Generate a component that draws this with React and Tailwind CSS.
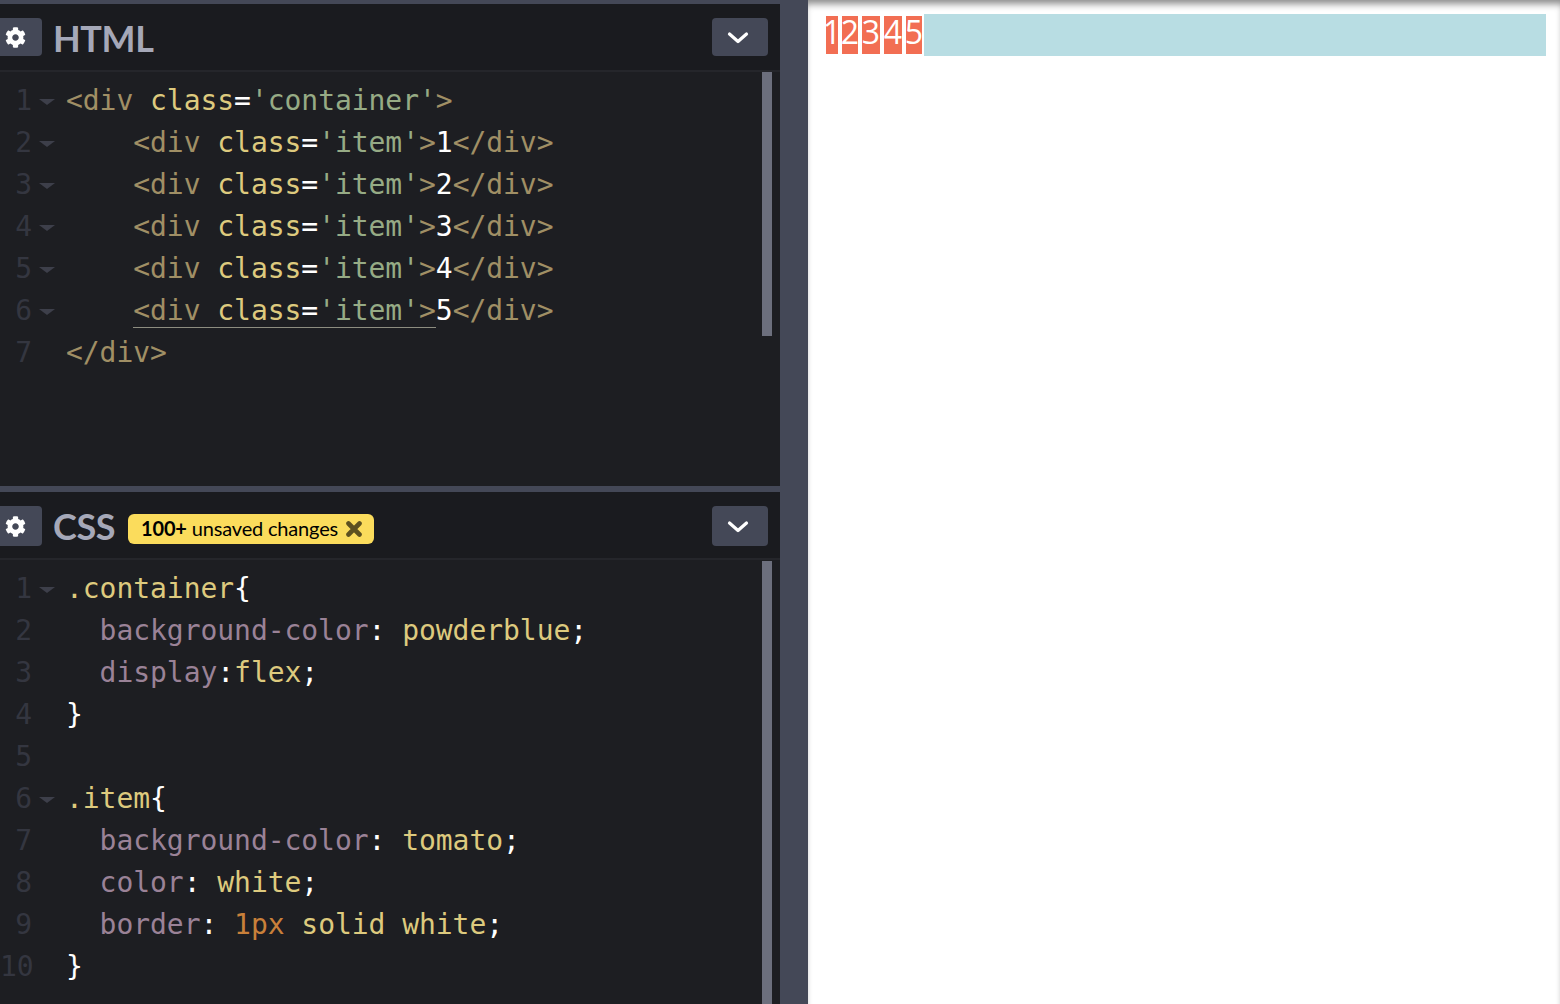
import React from 'react';
import { FaCog } from 'react-icons/fa';

const TAG = 'text-[#a08f65]';
const ATTR = 'text-[#ddca7e]';
const STR = 'text-[#96ab85]';
const WHITE = 'text-white';
const PROP = 'text-[#9a8297]';
const NUM = 'text-[#c9803a]';

function itemLine(n, underline) {
  const open = (
    <>
      <span className={TAG}>{'<div '}</span>
      <span className={ATTR}>class</span>
      <span className={WHITE}>=</span>
      <span className={STR}>'item'</span>
      <span className={TAG}>{'>'}</span>
    </>
  );
  return [
    ['    ', ''],
    underline ? [<span className="border-b border-[#8d8d80]">{open}</span>, ''] : [open, ''],
    [n, WHITE],
    ['</div>', TAG],
  ];
}

const htmlLines = [
  {
    fold: true,
    parts: [
      ['<div ', TAG],
      ['class', ATTR],
      ['=', WHITE],
      ["'container'", STR],
      ['>', TAG],
    ],
  },
  { fold: true, parts: itemLine('1') },
  { fold: true, parts: itemLine('2') },
  { fold: true, parts: itemLine('3') },
  { fold: true, parts: itemLine('4') },
  { fold: true, parts: itemLine('5', true) },
  { parts: [['</div>', TAG]] },
];

const cssLines = [
  { fold: true, parts: [['.container', ATTR], ['{', WHITE]] },
  { parts: [['  background-color', PROP], [': ', WHITE], ['powderblue', ATTR], [';', WHITE]] },
  { parts: [['  display', PROP], [':', WHITE], ['flex', ATTR], [';', WHITE]] },
  { parts: [['}', WHITE]] },
  { parts: [] },
  { fold: true, parts: [['.item', ATTR], ['{', WHITE]] },
  { parts: [['  background-color', PROP], [': ', WHITE], ['tomato', ATTR], [';', WHITE]] },
  { parts: [['  color', PROP], [': ', WHITE], ['white', ATTR], [';', WHITE]] },
  {
    parts: [
      ['  border', PROP],
      [': ', WHITE],
      ['1px', NUM],
      [' ', ''],
      ['solid white', ATTR],
      [';', WHITE],
    ],
  },
  { parts: [['}', WHITE]] },
];

function CodeLines({ lines }) {
  return (
    <div className="pt-[8px] font-['DejaVu_Sans_Mono',monospace] text-[28px] leading-[42px] tracking-[-0.05px] whitespace-pre">
      {lines.map((line, i) => (
        <div key={i} className="flex h-[42px] items-center">
          <div className="flex w-[66px] shrink-0 items-center">
            <span className="w-[32px] text-right text-[#343640]">{i + 1}</span>
            {line.fold && (
              <svg className="mt-[2px] ml-[7px]" width="16" height="6" viewBox="0 0 16 6">
                <path d="M0 0h16L8 6z" fill="#3d3f4a" />
              </svg>
            )}
          </div>
          <div>
            {line.parts.map((part, j) => (
              <span key={j} className={part[1]}>{part[0]}</span>
            ))}
          </div>
        </div>
      ))}
    </div>
  );
}

function PanelHeader({ title, tall, children }) {
  return (
    <div className="flex h-[68px] shrink-0 items-start border-b-2 border-[#25262b] bg-[#1a1b1f]">
      <div className={`mt-[14px] flex w-[42px] items-center justify-center rounded-r bg-[#444857] pr-[11px] text-white ${tall ? 'h-[40px]' : 'h-[38px]'}`}>
        <FaCog size={21} />
      </div>
      <h2 className="mt-[12px] ml-[11px] font-['Lato',sans-serif] text-[36px] leading-[44px] font-bold tracking-[-0.4px] text-[#a5a8b8]">{title}</h2>
      {children}
      <div className={`mt-[14px] mr-3 ml-auto flex w-[56px] items-center justify-center rounded bg-[#444857] pr-[4px] pt-[2px] text-white ${tall ? 'h-[40px]' : 'h-[38px]'}`}>
        <svg width="22" height="14" viewBox="0 0 22 14" fill="none">
          <path d="M2.5 3 11 10.5 19.5 3" stroke="white" strokeWidth="3.2" strokeLinecap="round" strokeLinejoin="round" />
        </svg>
      </div>
    </div>
  );
}

function Panel({ className, header, lines, thumbClass }) {
  return (
    <section className={`relative flex flex-col overflow-hidden bg-[#1d1e22] ${className}`}>
      {header}
      <CodeLines lines={lines} />
      {/* scrollbar thumb */}
      <div className={`absolute left-[762px] w-[10px] bg-[#6c6f7d] ${thumbClass}`} />
    </section>
  );
}

const items = [
  ['1', 'w-[16px]'],
  ['2', 'w-[20px]'],
  ['3', 'w-[22px]'],
  ['4', 'w-[22px]'],
  ['5', 'w-[20px]'],
];

export default function App() {
  return (
    <div className="flex h-screen overflow-hidden bg-white">
      <div className="flex w-[780px] shrink-0 flex-col">
        <div className="h-1 bg-[#444857]" />
        <Panel
          className="h-[482px]"
          header={<PanelHeader title="HTML" />}
          lines={htmlLines}
          thumbClass="top-[68px] h-[264px]"
        />
        <div className="h-[6px] bg-[#444857]" />
        <Panel
          className="flex-1"
          header={
            <PanelHeader title="CSS" tall>
              <div className="mt-[22px] ml-[13px] flex h-[30px] w-[246px] items-center rounded-md bg-[#fbdc5c] pb-[2px] pl-[13px] font-['Lato',sans-serif] text-[20px] tracking-[-0.18px] text-black">
                <b className="font-bold">100+</b>
                <span className="ml-[5px]">unsaved changes</span>
                <svg className="mt-[2px] ml-[8px]" width="16" height="16" viewBox="0 0 16 16">
                  <path d="M2.5 2.5 13.5 13.5M13.5 2.5 2.5 13.5" stroke="#5c5020" strokeWidth="4.6" strokeLinecap="round" />
                </svg>
              </div>
            </PanelHeader>
          }
          lines={cssLines}
          thumbClass="top-[69px] bottom-0"
        />
      </div>
      <div className="w-[28px] shrink-0 bg-[#444857]" />
      <main className="flex-1 pt-[14px] pr-[14px] pl-[16px] shadow-[inset_0_7px_7px_-3px_rgba(0,0,0,0.45)]">
        <div className="flex bg-[#b8dde3]">
          {items.map(([n, width]) => (
            <div
              key={n}
              className={`flex h-[42px] items-center justify-center border-2 border-white bg-[#f26e53] pb-[6px] font-['Open_Sans',sans-serif] text-[32px] font-normal text-white ${width}`}
            >
              {n}
            </div>
          ))}
        </div>
      </main>
    </div>
  );
}
